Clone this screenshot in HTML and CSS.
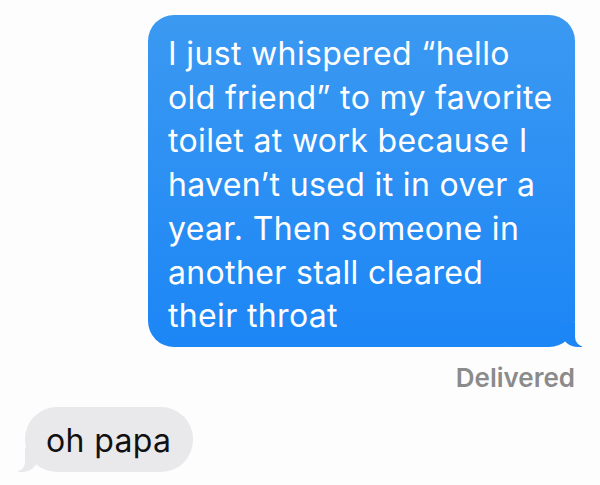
FILE: index.html
```html
<!DOCTYPE html>
<html lang="en">
<head>
    <meta charset="UTF-8">
    <meta name="viewport" content="width=device-width, initial-scale=1.0">
    <title>Messages</title>
    <link rel="stylesheet" href="styles.css">
</head>
<body>
    <div class="thread">
        <div class="bubble sent">I just whispered “hello<br>old friend” to my favorite<br>toilet at work because I<br>haven’t used it in over a<br>year. Then someone in<br>another stall cleared<br>their throat</div>
        <div class="status">Delivered</div>
        <div class="bubble received">oh papa</div>
    </div>
</body>
</html>
```

FILE: styles.css
```css
body {
    margin: 0;
    background: #fdfdfd;
    font-family: Inter, "Liberation Sans", sans-serif;
}

.thread {
    display: flex;
    flex-direction: column;
    padding: 15px 25px 0 25px;
}

.bubble {
    position: relative;
    font-size: 32px;
    letter-spacing: 0.35px;
    line-height: 43.7px;
}

.sent {
    align-self: flex-end;
    width: 427px;
    box-sizing: border-box;
    padding: 17px 10px 9px 20px;
    background: linear-gradient(#3b99f1, #1c86f6);
    color: #fff;
    border-radius: 26px;
}

/* tail */
.sent::before {
    content: "";
    position: absolute;
    right: -7px;
    bottom: 0;
    width: 20px;
    height: 24px;
    background: #1c86f6;
    border-bottom-left-radius: 16px 14px;
}

.sent::after {
    content: "";
    position: absolute;
    right: -26px;
    bottom: 0;
    width: 26px;
    height: 24px;
    background: #fdfdfd;
    border-bottom-left-radius: 10px;
}

.status {
    align-self: flex-end;
    margin-top: 16px;
    font-size: 26px;
    font-weight: 600;
    color: #8b8b8b;
    line-height: 30px;
}

.received {
    align-self: flex-start;
    margin-top: 14px;
    padding: 12px 22px 9px 21px;
    background: #e9e9eb;
    color: #111;
    border-radius: 32px;
}

.received::before {
    content: "";
    position: absolute;
    left: -7px;
    bottom: 0;
    width: 20px;
    height: 24px;
    background: #e9e9eb;
    border-bottom-right-radius: 16px 14px;
}

.received::after {
    content: "";
    position: absolute;
    left: -26px;
    bottom: 0;
    width: 26px;
    height: 24px;
    background: #fdfdfd;
    border-bottom-right-radius: 10px;
}
```
